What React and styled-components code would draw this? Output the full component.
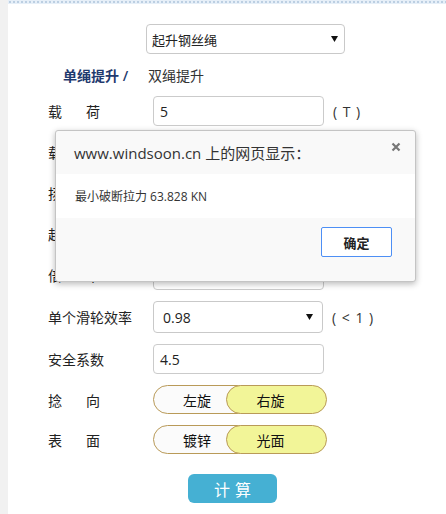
import React from "react";
import styled, { createGlobalStyle } from "styled-components";

const Global = createGlobalStyle`
  html, body { margin: 0; padding: 0; background: #fff; }
  body {
    font-family: "Open Sans", "Noto Sans CJK SC", sans-serif;
    color: #333;
    width: 446px;
    height: 514px;
    overflow: hidden;
  }
`;

const FONT = `"Open Sans", "Noto Sans CJK SC", sans-serif`;

const Page = styled.div`
  position: relative;
  display: flex;
  width: 446px;
  height: 514px;
`;

const SideStrip = styled.div`
  width: 8px;
  flex: none;
  background: #f1f1f1;
`;

const Main = styled.div`
  flex: 1;
  display: flex;
  flex-direction: column;
`;

const TopBand = styled.div`
  height: 4px;
  background-color: #e6eff8;
  background-image: radial-gradient(circle, #bccfe2 0.8px, transparent 1.2px);
  background-size: 4px 4px;
  background-position: 0 0;
`;

const Content = styled.div`
  display: flex;
  flex-direction: column;
  padding: 20px 0 0 40px;
`;

const SelectBox = styled.div`
  box-sizing: border-box;
  display: flex;
  align-items: center;
  justify-content: space-between;
  width: ${(p) => p.$w}px;
  height: ${(p) => p.$h}px;
  margin-left: ${(p) => p.$ml || 0}px;
  padding: 0 ${(p) => p.$pr}px 0 ${(p) => p.$pl}px;
  border: 1px solid #c9c9c9;
  border-radius: 4px;
  background: #fff;
  font-size: ${(p) => p.$fs}px;
  color: #222;
`;

const Arrow = () => (
  <svg width="7" height="6" viewBox="0 0 7 6">
    <path d="M0 0 H7 L3.5 6 Z" fill="#111" />
  </svg>
);

const TabRow = styled.div`
  display: flex;
  align-items: center;
  height: 42px;
  padding-left: 15px;
  font-size: 14px;
`;

const Tab = styled.span`
  color: ${(p) => (p.$active ? "#1f3a6e" : "#333")};
  font-weight: ${(p) => (p.$active ? 600 : 400)};
  margin-right: ${(p) => p.$mr || 0}px;
  white-space: pre;
`;

const Form = styled.div`
  display: flex;
  flex-direction: column;
  gap: 11px;
`;

const Row = styled.div`
  display: flex;
  align-items: center;
`;

const Label = styled.div`
  width: 105px;
  flex: none;
  font-size: 14px;
  color: #222;
  display: flex;
`;

const SpreadLabel = styled.span`
  display: flex;
  justify-content: space-between;
  width: 52px;
`;

const Input = styled.div`
  box-sizing: border-box;
  width: 171px;
  height: 30px;
  border: 1px solid #cbcbcb;
  border-radius: 4px;
  padding-left: 6px;
  display: flex;
  align-items: center;
  font-size: 14px;
  color: #222;
`;

const Unit = styled.span`
  margin-left: 9px;
  font-size: 14px;
  color: #333;
  word-spacing: 2px;
  white-space: pre;
`;

const Toggle = styled.div`
  display: flex;
  height: 29px;
`;

const Option = styled.div`
  box-sizing: border-box;
  position: relative;
  z-index: ${(p) => (p.$on ? 2 : 1)};
  width: ${(p) => p.$w}px;
  height: 29px;
  margin-left: ${(p) => p.$ml || 0}px;
  padding-right: 12px;
  border: 1px solid #b99a58;
  border-radius: 15px;
  background: ${(p) => (p.$on ? "#f2f598" : "#fbfbfb")};
  display: flex;
  align-items: center;
  justify-content: center;
  font-size: 14px;
  color: #111;
`;

const CalcButton = styled.div`
  margin: 20px 0 0 140px;
  width: 89px;
  height: 29px;
  border-radius: 6px;
  background: #45b0d3;
  color: #fff;
  font-size: 16px;
  letter-spacing: 5px;
  text-indent: 5px;
  display: flex;
  align-items: center;
  justify-content: center;
`;

const Dialog = styled.div`
  position: absolute;
  left: 55px;
  top: 130px;
  width: 361px;
  height: 152px;
  box-sizing: border-box;
  border: 1px solid #c4c4c4;
  border-radius: 3px;
  background: #f9f9f9;
  box-shadow: 0 2px 6px rgba(0, 0, 0, 0.28);
  display: flex;
  flex-direction: column;
  font-family: ${FONT};
`;

const DialogHead = styled.div`
  position: relative;
  height: 43px;
  display: flex;
  align-items: center;
  padding-left: 18px;
  font-size: 15px;
  color: #333;
`;

const CloseIcon = styled.svg`
  position: absolute;
  right: 14px;
  top: 11px;
`;

const DialogBody = styled.div`
  height: 44px;
  background: #fff;
  display: flex;
  align-items: center;
  padding-left: 19px;
  font-size: 12px;
  color: #333;
`;

const DialogFoot = styled.div`
  flex: 1;
  display: flex;
  justify-content: flex-end;
  padding: 9px 23px 0 0;
`;

const OkButton = styled.div`
  box-sizing: border-box;
  width: 71px;
  height: 30px;
  border: 1px solid #4d8ff5;
  border-radius: 2px;
  background: #fff;
  display: flex;
  align-items: center;
  justify-content: center;
  font-size: 13px;
  font-weight: 700;
  color: #222;
`;

const fields = [
  { label: ["载", "荷"], value: "5", unit: "( T )" },
  { label: "载荷倍率", value: "1" },
  { label: ["扬", "程"], value: "10" },
  { label: "起升高度", value: "8" },
  { label: ["倍", "率"], value: "2" },
];

function FieldLabel({ label }) {
  return (
    <Label>
      {Array.isArray(label) ? (
        <SpreadLabel>
          <span>{label[0]}</span>
          <span>{label[1]}</span>
        </SpreadLabel>
      ) : (
        label
      )}
    </Label>
  );
}

export default function App() {
  return (
    <Page>
      <Global />
      <SideStrip />
      <Main>
        <TopBand />
        <Content>
          <SelectBox $w={199} $h={30} $ml={98} $pl={5} $pr={6} $fs={13}>
            <span>起升钢丝绳</span>
            <Arrow />
          </SelectBox>
          <TabRow>
            <Tab $active $mr={20}>单绳提升 /</Tab>
            <Tab>双绳提升</Tab>
          </TabRow>
          <Form>
            {fields.map((f, i) => (
              <Row key={i}>
                <FieldLabel label={f.label} />
                <Input>{f.value}</Input>
                {f.unit && <Unit>{f.unit}</Unit>}
              </Row>
            ))}
            <Row>
              <FieldLabel label="单个滑轮效率" />
              <SelectBox $w={170} $h={32} $pl={9} $pr={9} $fs={14}>
                <span>0.98</span>
                <Arrow />
              </SelectBox>
              <Unit>( &lt; 1 )</Unit>
            </Row>
            <Row>
              <FieldLabel label="安全系数" />
              <Input>4.5</Input>
            </Row>
            <Row>
              <FieldLabel label={["捻", "向"]} />
              <Toggle>
                <Option $w={100}>左旋</Option>
                <Option $on $w={101} $ml={-27}>右旋</Option>
              </Toggle>
            </Row>
            <Row>
              <FieldLabel label={["表", "面"]} />
              <Toggle>
                <Option $w={100}>镀锌</Option>
                <Option $on $w={101} $ml={-27}>光面</Option>
              </Toggle>
            </Row>
          </Form>
          <CalcButton>计算</CalcButton>
        </Content>
      </Main>
      <Dialog>
        <DialogHead>
          www.windsoon.cn 上的网页显示：
          <CloseIcon width="10" height="10" viewBox="0 0 10 10">
            <path d="M1.5 1.5 L8.5 8.5 M8.5 1.5 L1.5 8.5" stroke="#777" strokeWidth="2.2" />
          </CloseIcon>
        </DialogHead>
        <DialogBody>最小破断拉力 63.828 KN</DialogBody>
        <DialogFoot>
          <OkButton>确定</OkButton>
        </DialogFoot>
      </Dialog>
    </Page>
  );
}
